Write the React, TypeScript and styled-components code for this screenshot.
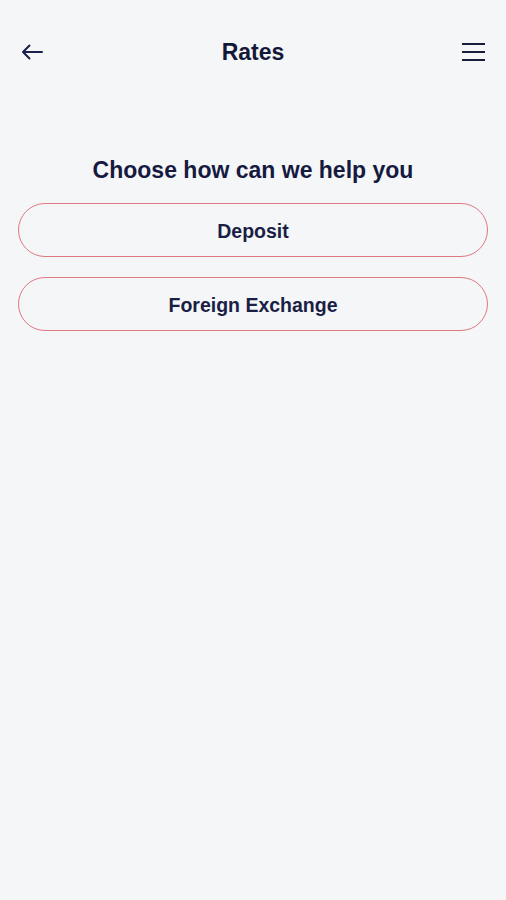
import React from 'react'
import styled, { createGlobalStyle } from 'styled-components'

const GlobalStyle = createGlobalStyle`
  html, body {
    margin: 0;
    padding: 0;
    background: #f4f6f8;
  }
  body {
    font-family: 'Liberation Sans', Arial, sans-serif;
    color: #161a40;
  }
`

const Page = styled.div`
  min-height: 900px;
  background: #f4f6f8;
`

const Header = styled.header`
  display: grid;
  grid-template-columns: 60px 1fr 60px;
  align-items: center;
  height: 40px;
  padding: 32px 0 0;
`

const IconButton = styled.button<{ align?: 'left' | 'right' }>`
  display: flex;
  justify-content: ${({ align }) => (align === 'right' ? 'flex-end' : 'flex-start')};
  align-items: center;
  background: none;
  border: none;
  padding: ${({ align }) => (align === 'right' ? '0 21px 0 0' : '0 0 0 21px')};
  color: #1c2050;
  cursor: pointer;
`

const Title = styled.h1`
  margin: 0;
  text-align: center;
  font-size: 23px;
  font-weight: 700;
  color: #141838;
`

const Content = styled.main`
  display: flex;
  flex-direction: column;
  gap: 20px;
  padding: 85px 18px 0 18px;
`

const Heading = styled.h2`
  margin: 0 0 -1px;
  text-align: center;
  font-size: 23px;
  font-weight: 700;
  color: #161a40;
`

const OptionButton = styled.button`
  height: 54px;
  width: 100%;
  padding: 3px 0 0;
  border: 1.5px solid #e27682;
  border-radius: 27px;
  background: transparent;
  font-family: 'Liberation Sans', Arial, sans-serif;
  font-size: 19.5px;
  font-weight: 700;
  color: #1b1e45;
  cursor: pointer;
`

const BackIcon = () => (
  <svg width="22" height="16" viewBox="0 0 22 16" fill="none">
    <path
      d="M21 8H2M8.5 1.5L2 8l6.5 6.5"
      stroke="currentColor"
      strokeWidth="2"
      strokeLinecap="round"
      strokeLinejoin="round"
    />
  </svg>
)

const MenuIcon = () => (
  <svg width="23" height="18" viewBox="0 0 23 18" fill="none">
    <path d="M0 1h23M0 9h23M0 17h23" stroke="#1a1d3a" strokeWidth="2" />
  </svg>
)

const options = ['Deposit', 'Foreign Exchange']

const App = () => {
  return (
    <Page>
      <GlobalStyle />
      <Header>
        <IconButton align="left" aria-label="Back">
          <BackIcon />
        </IconButton>
        <Title>Rates</Title>
        <IconButton align="right" aria-label="Menu">
          <MenuIcon />
        </IconButton>
      </Header>
      <Content>
        <Heading>Choose how can we help you</Heading>
        {options.map((label) => (
          <OptionButton key={label}>{label}</OptionButton>
        ))}
      </Content>
    </Page>
  )
}

export default App
